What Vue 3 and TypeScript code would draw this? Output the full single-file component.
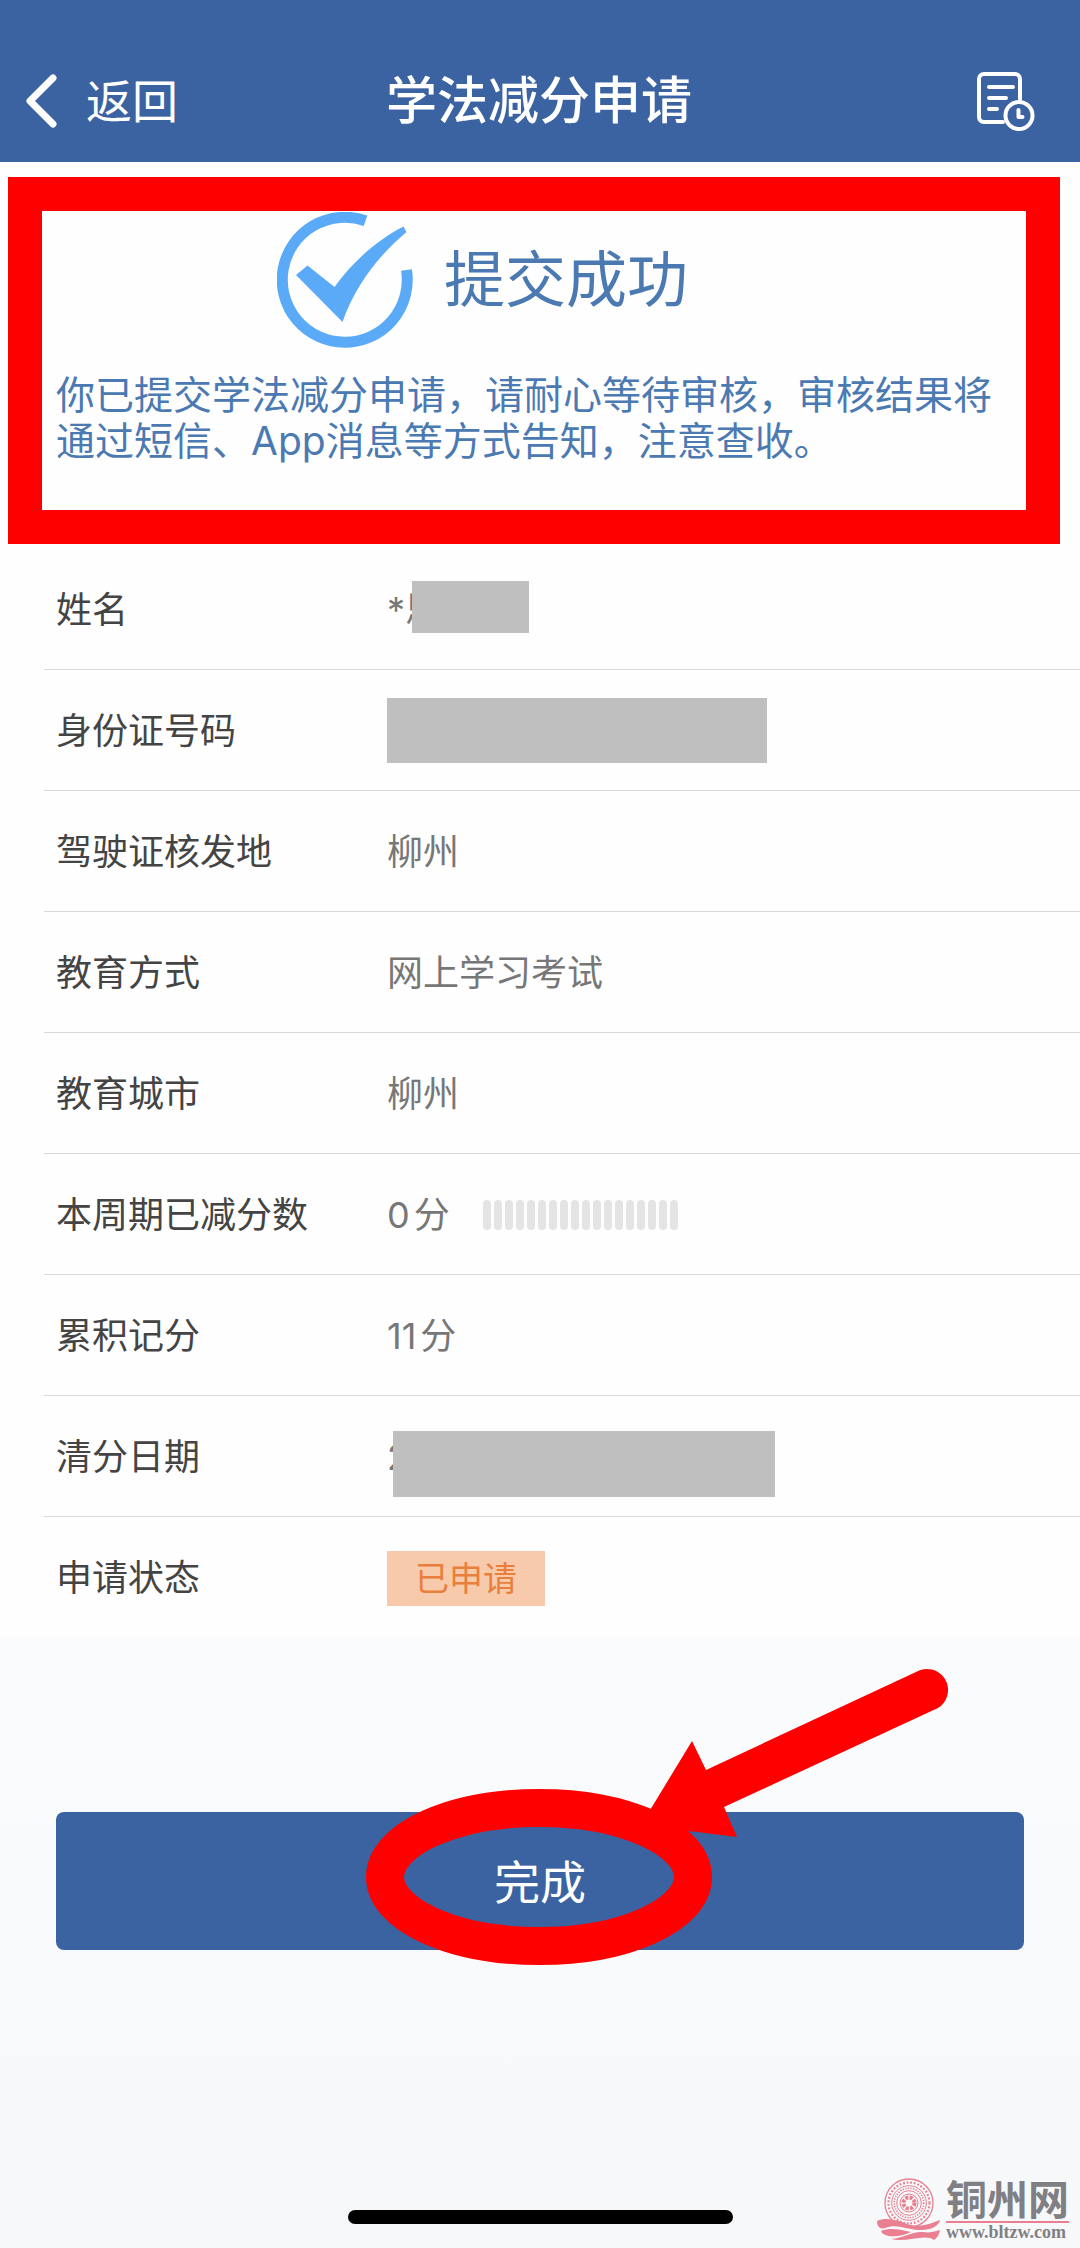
<script setup lang="ts">
interface Mask {
  left: number
  top: number
  width: number
  height: number
}

interface Detail {
  label: string
  value?: string
  unit?: string
  mask?: Mask
  meter?: number
  tag?: string
}

const details: Detail[] = [
  { label: '姓名', value: '*思', mask: { left: 25, top: 30, width: 117, height: 52 } },
  { label: '身份证号码', mask: { left: 0, top: 26, width: 380, height: 65 } },
  { label: '驾驶证核发地', value: '柳州' },
  { label: '教育方式', value: '网上学习考试' },
  { label: '教育城市', value: '柳州' },
  { label: '本周期已减分数', value: '0', unit: '分', meter: 18 },
  { label: '累积记分', value: '11', unit: '分' },
  { label: '清分日期', value: '2', mask: { left: 6, top: 33, width: 382, height: 66 } },
  { label: '申请状态', tag: '已申请' },
]

const maskStyle = (m: Mask) => ({
  left: `${m.left}px`,
  top: `${m.top}px`,
  width: `${m.width}px`,
  height: `${m.height}px`,
})
</script>

<template>
  <div class="page">
    <header class="bar">
      <button type="button" class="back">
        <svg width="36" height="56" viewBox="0 0 36 56" aria-hidden="true">
          <path d="M29 5 6 28l23 23" fill="none" stroke="currentColor" stroke-width="7" stroke-linecap="round" stroke-linejoin="round" />
        </svg>
        <span>返回</span>
      </button>
      <h1 class="title">学法减分申请</h1>
      <button type="button" class="history" aria-label="申请记录">
        <svg width="60" height="60" viewBox="0 0 60 60" fill="none" stroke="currentColor" stroke-width="4" stroke-linecap="round" stroke-linejoin="round" aria-hidden="true">
          <path d="M27 51H8a5 5 0 0 1-5-5V8a5 5 0 0 1 5-5h31a5 5 0 0 1 5 5v20" />
          <path d="M13 16h24M13 27h17M13 38h8" />
          <circle cx="43" cy="44.500" r="13.500" />
          <path d="M42.500 39v7h4" />
        </svg>
      </button>
    </header>

    <main class="content">
      <section class="notice">
        <div class="result">
          <svg width="136" height="136" viewBox="0 0 136 136" aria-hidden="true">
            <path d="M88.500 8.800A62.500 62.500 0 1 0 129.500 58" fill="none" stroke="#5aaaf8" stroke-width="11" />
            <path d="M19 63 30.500 53.500 57.500 75C74 52 98 29 126.500 14.500L129.500 20C104 41 78 73 65.500 110Z" fill="#5aaaf8" />
          </svg>
          <h2>提交成功</h2>
        </div>
        <p>你已提交学法减分申请，请耐心等待审核，审核结果将通过短信、App消息等方式告知，注意查收。</p>
      </section>

      <dl class="details">
        <div v-for="item in details" :key="item.label" class="row">
          <dt>{{ item.label }}</dt>
          <dd>
            <span v-if="item.value">{{ item.value }}</span>
            <span v-if="item.unit">{{ item.unit }}</span>
            <span v-if="item.meter" class="meter" aria-hidden="true">
              <i v-for="n in item.meter" :key="n"></i>
            </span>
            <span v-if="item.tag" class="tag">{{ item.tag }}</span>
            <span v-if="item.mask" class="mask" :style="maskStyle(item.mask)"></span>
          </dd>
        </div>
      </dl>
    </main>

    <footer class="foot">
      <div class="action">
        <button type="button" class="done">完成</button>
        <svg class="pointer" width="600" height="310" viewBox="360 1660 600 310" aria-hidden="true">
          <ellipse cx="539" cy="1877" rx="154" ry="69" fill="none" stroke="#f00" stroke-width="38" />
          <path d="M641 1825 692 1741 706 1770 916 1672A20.500 20.500 0 0 1 938 1708L724 1807 737 1837Z" fill="#f00" />
        </svg>
      </div>
      <div class="home"></div>
    </footer>

    <a class="site" href="#">
      <svg width="64" height="64" viewBox="0 0 64 64" fill="none" stroke="#e97f90" aria-hidden="true">
        <circle cx="32" cy="25" r="24" stroke-width="1.300" />
        <circle cx="32" cy="25" r="20.500" stroke-width="2.200" stroke-dasharray="1.800 1.800" />
        <circle cx="32" cy="25" r="17.300" stroke-width="1" />
        <circle cx="32" cy="25" r="14.700" stroke-width="1.600" stroke-dasharray="1.300 1.300" />
        <circle cx="32" cy="25" r="12.300" stroke-width="1" />
        <circle cx="32" cy="25" r="9" stroke-width="1" />
        <circle cx="32" cy="25" r="5.500" stroke-width="4" stroke-dasharray="3 1.320" />
        <path d="M0 43C9 39 20 42 30 46 42 50 53 46 63 42 62 48 54 52 44 52 30 52 20 45 8 50 3 52 0 48 0 43Z" fill="#e97f90" stroke="none" />
        <path d="M4 53C14 49 24 52 34 54 26 58 18 59 12 58 8 57 5 56 4 53Z" fill="#e97f90" stroke="none" />
        <path d="M14 61C26 60 36 53 46 54 52 55 56 54 63 52 62 57 60 60 57 62 48 55 30 65 14 61Z" fill="#e97f90" stroke="none" />
      </svg>
      <span class="site-text">
        <strong>铜州网</strong>
        <b>www.bltzw.com</b>
      </span>
    </a>
  </div>
</template>

<style>
body {
  margin: 0;
}
</style>

<style scoped>
.page {
  position: relative;
  display: flex;
  flex-direction: column;
  min-height: 100vh;
  background: #fefefe;
  font-family: Inter, 'Noto Sans CJK SC', sans-serif;
  color: #444;
}

button {
  border: 0;
  padding: 0;
  background: none;
  color: #fff;
  font: inherit;
}

h1,
h2,
p,
dl,
dd {
  margin: 0;
}

.bar {
  display: grid;
  grid-template-columns: 1fr auto 1fr;
  align-items: center;
  height: 120px;
  padding: 41px 44px 1px 24px;
  background: #3c63a1;
  color: #fff;
}

.back {
  display: flex;
  align-items: center;
  gap: 26px;
  font-size: 46px;
  line-height: 56px;
}

.title {
  padding-left: 18px;
  font-size: 51px;
  line-height: 60px;
  font-weight: 500;
}

.history {
  justify-self: end;
  height: 60px;
}

.notice {
  margin: 15px 20px 5px 8px;
  padding: 1px 12px 46px 14px;
  border: 34px solid #f00;
}

.result {
  display: flex;
  align-items: center;
  gap: 31px;
  padding-left: 221px;
  color: #4b79b2;
}

.result h2 {
  font-size: 61px;
  line-height: 72px;
  font-weight: 400;
}

.notice p {
  margin-top: 24px;
  color: #4b79b2;
  font-size: 39px;
  line-height: 46px;
}

.details {
  margin-left: 44px;
  font-size: 36px;
}

.row {
  display: grid;
  grid-template-columns: 331px 1fr;
  height: 118px;
  padding: 2px 0 0 12px;
  line-height: 118px;
  border-bottom: 1px solid #d9d9d9;
}

.row:last-child {
  border-bottom: 0;
}

dd {
  position: relative;
  display: flex;
  align-items: center;
  gap: 4px;
  color: #777;
}

.mask {
  position: absolute;
  background: #bfbfbf;
}

.meter {
  display: flex;
  gap: 3px;
  margin-left: 29px;
}

.meter i {
  width: 8px;
  height: 30px;
  border-radius: 4px;
  background: #e4e4e4;
}

.tag {
  padding: 0 28px;
  background: #f7caac;
  color: #e97f3c;
  font-size: 34px;
  line-height: 55px;
}

.foot {
  display: flex;
  flex: 1;
  flex-direction: column;
  padding: 175px 56px 24px;
  background: linear-gradient(#f9fbfd, #f7f8fa);
}

.action {
  position: relative;
}

.done {
  display: block;
  width: 100%;
  height: 138px;
  padding-bottom: 4px;
  border-radius: 8px;
  background: #3c63a1;
  font-size: 46px;
}

.pointer {
  position: absolute;
  left: calc(50% - 180px);
  top: -152px;
  pointer-events: none;
}

.home {
  width: 385px;
  height: 14px;
  margin: auto auto 0;
  border-radius: 7px;
  background: #000;
}

.site {
  position: absolute;
  right: 11px;
  bottom: 6px;
  display: flex;
  align-items: center;
  gap: 5px;
  color: #808084;
  text-decoration: none;
}

.site-text {
  display: flex;
  flex-direction: column;
}

.site strong {
  border-bottom: 2px solid #e97f90;
  font-size: 41px;
  line-height: 42px;
}

.site b {
  font-family: 'Liberation Serif', serif;
  font-size: 18px;
  line-height: 18px;
}
</style>
